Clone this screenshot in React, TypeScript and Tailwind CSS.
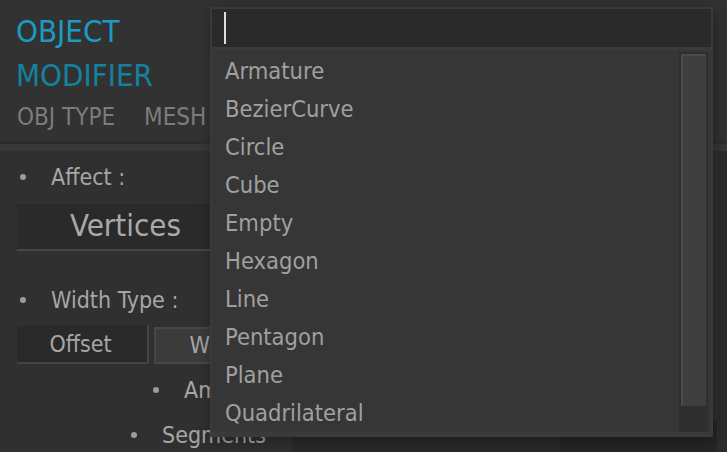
const items = [
  'Armature',
  'BezierCurve',
  'Circle',
  'Cube',
  'Empty',
  'Hexagon',
  'Line',
  'Pentagon',
  'Plane',
  'Quadrilateral',
];

function Bullet() {
  return <span className="block w-[6px] h-[6px] rounded-full bg-[#9c9c9c] shrink-0" />;
}

function Row({ pad, label }: { pad: string; label: string }) {
  return (
    <div className={`flex items-center gap-[25px] h-[30px] ${pad}`}>
      <Bullet />
      <span className="text-[23px] text-[#a6a6a6] whitespace-nowrap">{label}</span>
    </div>
  );
}

function ObjectPicker() {
  return (
    <div className="absolute left-[210px] top-[7px] w-[503px] h-[430px] bg-[#3a3a3a] px-[2px] pt-[2px] pb-[5px] flex flex-col shadow-[2px_4px_14px_rgba(0,0,0,0.35)]">
      <div className="h-[38px] bg-[#2a2a2a] flex items-center pl-[12px]">
        <span className="block w-[2px] h-[32px] bg-[#dcdcdc]" />
      </div>
      <div className="mt-[3px] flex-1 bg-[#363636] flex pt-[2px] pr-[3px]">
        <ul className="flex-1">
          {items.map(item => (
            <li key={item} className="h-[38px] leading-[38px] pl-[13px] text-[23.5px] text-[#a0a0a0]">
              {item}
            </li>
          ))}
        </ul>
        <div className="w-[29px] bg-[#2e2e2e] p-[2px] pb-[26px]">
          <div className="h-full bg-[#3f3f3f] border-l-2 border-t-2 border-[#4a4a4a]" />
        </div>
      </div>
    </div>
  );
}

export default function App() {
  return (
    <div className="relative w-[727px] h-[452px] overflow-hidden bg-[#303030] font-['DejaVu_Sans_Condensed','DejaVu_Sans',sans-serif] font-stretch-condensed">
      <header className="h-[141px] bg-[#323232] pl-[16px] pt-[9px]">
        <div className="h-[44px] leading-[44px] text-[31px] text-[#1b9bc3]">OBJECT</div>
        <div className="h-[44px] leading-[44px] text-[31px] text-[#14829f]">MODIFIER</div>
        <div className="mt-[5px] h-[30px] leading-[30px] text-[24px] text-[#7c7c7c] flex gap-[29px] pl-[1px]">
          <span>OBJ TYPE</span>
          <span>MESH</span>
        </div>
      </header>
      <div className="h-[3px] bg-[#2d2d2d]" />
      <div className="h-[7px] bg-[#383838]" />

      <main className="flex">
        <div className="flex-1">
          <div className="mt-[11px]">
            <Row pad="pl-[20px]" label="Affect :" />
          </div>
          <div className="mt-[12px] flex gap-[6px] pl-[17px]">
            <div className="w-[217px] h-[47px] bg-[#2a2a2a] border-b-2 border-[#464646] flex items-center justify-center pb-[3px] text-[31px] text-[#a9a9a9]">
              Vertices
            </div>
            <div className="w-[217px] h-[47px] bg-[#3b3b3b] border-2 border-[#474747] flex items-center justify-center text-[31px] text-[#a9a9a9]">
              Edges
            </div>
          </div>
          <div className="mt-[34px]">
            <Row pad="pl-[20px]" label="Width Type :" />
          </div>
          <div className="mt-[11px] flex gap-[5px] pl-[17px] text-[23px] text-[#a6a6a6]">
            <div className="w-[132px] h-[38px] bg-[#292929] border-r-2 border-b-2 border-[#444444] flex items-center justify-center pr-[3px]">
              Offset
            </div>
            <div className="w-[131px] h-[37px] mt-[1px] bg-[#3b3b3b] border-2 border-[#474747] flex items-center justify-center">
              Width
            </div>
            <div className="w-[131px] h-[37px] mt-[1px] bg-[#3b3b3b] border-2 border-[#474747] flex items-center justify-center">
              Depth
            </div>
          </div>
          <div className="mt-[11px]">
            <Row pad="pl-[153px]" label="Amount :" />
          </div>
          <div className="mt-[15px] flex items-start">
            <div className="w-[292px] shrink-0">
              <Row pad="pl-[131px]" label="Segments" />
            </div>
            <div className="w-[268px] h-[40px] bg-[#2a2a2a]" />
            <div className="w-[157px] h-[40px] bg-[#262626]" />
          </div>
        </div>
        <div className="w-[9px] h-[320px] bg-[#2c2c2c]" />
      </main>

      <ObjectPicker />
    </div>
  );
}
